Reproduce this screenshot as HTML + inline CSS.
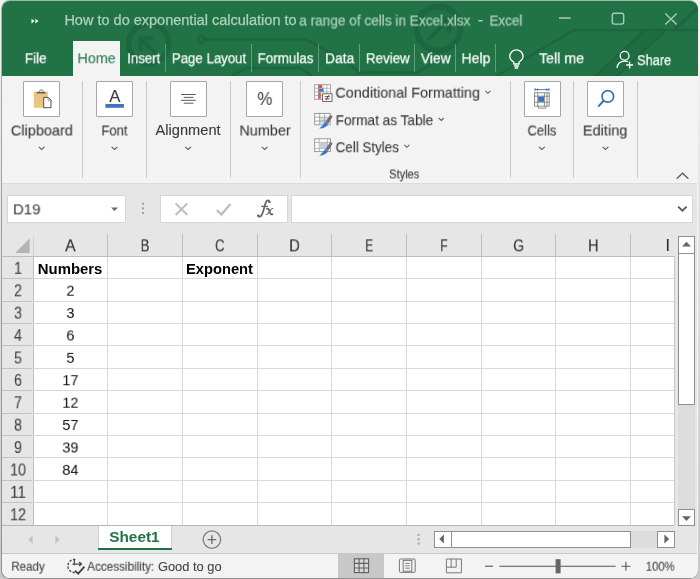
<!DOCTYPE html>
<html><head><meta charset="utf-8"><title>Excel</title>
<style>
html,body{margin:0;padding:0;width:700px;height:579px;overflow:hidden;}
body{background:linear-gradient(#f6f2f4,#e4e4e4 40%,#c9c9c9);font-family:"Liberation Sans",sans-serif;position:relative;}
.a{position:absolute;}
.t{position:absolute;left:0;top:0;white-space:pre;line-height:1;transform-origin:0 0;display:inline-block;will-change:transform;-webkit-text-stroke:0.25px currentColor;}
#win{position:absolute;left:1.5px;top:0.5px;width:696.5px;height:577.6px;border-radius:8px;overflow:hidden;background:#f3f3f3;}
#shadow{position:absolute;left:1px;top:0;width:697px;height:579px;border-radius:8.5px;background:linear-gradient(#9cbaa8 0,#9cbaa8 75px,#a4a4a4 76px,#909090 100%);}
.sep{position:absolute;width:1px;background:#c9c9c9;top:81px;height:97px;}
.tsep{position:absolute;width:1px;background:rgba(255,255,255,.3);top:44px;height:28px;}
.bigbtn{position:absolute;top:81.3px;width:35.2px;height:33.3px;background:#fff;border:1px solid #a6a6a6;border-radius:1px;box-sizing:content-box;}
svg{position:absolute;overflow:visible;}
</style></head><body>
<div id="shadow"></div>
<div id="win">
<div class="a" style="left:-1.5px;top:-0.5px;width:700px;height:579px;">
<div class="a" style="left:0.00px;top:0.00px;width:700.00px;height:75.60px;background:#217346;"></div>
<svg style="left:0;top:0" width="700" height="76" viewBox="0 0 700 76" fill="none" stroke="#1a5c38" stroke-opacity=".5">
<circle cx="148.5" cy="43.7" r="20" stroke-width="5.5"/>
<path d="M158 56 L141.5 39.5 M140.5 51 V38.5 H153" stroke-width="4"/>
<circle cx="201.3" cy="39.2" r="3.3" stroke-width="2.5"/>
<path d="M205 39.2 H306 L346 62 L360 72.5 H416 L432 64" stroke-width="3"/>
<circle cx="438.5" cy="28.5" r="22" stroke-width="6"/>
<path d="M428 40 L448 20 M435 19 H449 V33" stroke-width="4.5"/>
<path d="M232 76 L247 68 H300 L312 76" stroke-width="2.5"/>
<path d="M497 76 L521 61 L574 30 H700" stroke-width="2.5"/>
<path d="M593 78 L643.5 31 H665.5 L615 78 Z" fill="#1a5c38" fill-opacity=".3" stroke="none"/>
<path d="M593 78 L643.5 31 M615 78 L665.5 31" stroke-width="2"/>
<path d="M700 6 L675 29" stroke-width="3"/>
</svg>
<div class="a" style="left:1.30px;top:75.60px;width:1.00px;height:503.40px;background:#a6a6a6;"></div>
<div class="a" style="left:73.00px;top:41.00px;width:47.20px;height:35.50px;background:#f3f3f3;"></div>
<div class="tsep" style="left:165.2px"></div>
<div class="tsep" style="left:250.9px"></div>
<div class="tsep" style="left:318.1px"></div>
<div class="tsep" style="left:358.9px"></div>
<div class="tsep" style="left:414.4px"></div>
<div class="tsep" style="left:455.2px"></div>
<div class="tsep" style="left:495.2px"></div>
<svg style="left:0;top:0" width="700" height="76" viewBox="0 0 700 76">
<path d="M31.5 18.7 L34.5 21.1 L31.5 23.5 Z M35.4 18.7 L38.4 21.1 L35.4 23.5 Z" fill="#fff"/>
<path d="M559 18 H570.6" stroke="#a9ccb8" stroke-width="1.4" fill="none"/>
<rect x="612.3" y="13.3" width="11.4" height="10.8" rx="2" stroke="#a9ccb8" stroke-width="1.4" fill="none"/>
<path d="M665.3 13.6 L676.7 24.6 M676.7 13.6 L665.3 24.6" stroke="#a9ccb8" stroke-width="1.4" fill="none"/>
<!-- lightbulb -->
<path d="M513.7 64 V62 C511.2 60.4 509.8 58.6 509.8 56.4 A6.6 6.6 0 0 1 523 56.4 C523 58.6 521.6 60.4 519.1 62 V64 Z M513.9 66 H518.9 M514.7 68 H518.1" stroke="#fff" stroke-width="1.3" fill="none" stroke-linejoin="round"/>
<!-- share person -->
<circle cx="624.6" cy="55.8" r="4.4" stroke="#fff" stroke-width="1.3" fill="none"/>
<path d="M617 67.8 C617.6 63.4 620.4 61.1 624.8 61.1 C626.2 61.1 627.2 61.3 628 61.7" stroke="#fff" stroke-width="1.3" fill="none"/>
<path d="M629.6 61.6 V68.4 M626.2 65 H633" stroke="#fff" stroke-width="1.3" fill="none"/>
</svg>
<div class="a" style="left:2.30px;top:75.60px;width:694.90px;height:107.80px;background:#f3f3f3;"></div>
<div class="a" style="left:73.00px;top:75.00px;width:47.20px;height:2.00px;background:#f3f3f3;"></div>
<div class="sep" style="left:82.0px"></div>
<div class="sep" style="left:145.8px"></div>
<div class="sep" style="left:229.8px"></div>
<div class="sep" style="left:299.9px"></div>
<div class="sep" style="left:509.9px"></div>
<div class="sep" style="left:572.9px"></div>
<div class="sep" style="left:636.5px"></div>
<div class="bigbtn" style="left:23.3px"></div>
<div class="bigbtn" style="left:96.0px"></div>
<div class="bigbtn" style="left:170.2px"></div>
<div class="bigbtn" style="left:246.3px"></div>
<div class="bigbtn" style="left:523.6px"></div>
<div class="bigbtn" style="left:586.9px"></div>
<svg style="left:0;top:76px" width="700" height="110" viewBox="0 76 700 110">
<!-- clipboard -->
<rect x="33.8" y="91.6" width="14" height="16.2" rx="0.6" fill="#ecc481"/>
<path d="M39.3 92.4 C39.3 88.8 43.3 88.8 43.3 92.4" fill="#e4e4e4" stroke="#7a7a7a" stroke-width="1"/>
<path d="M36.8 92.7 H45.4" stroke="#5f5f5f" stroke-width="1.5"/>
<path d="M43.7 97.4 H48.3 L51 100.1 V107.7 H43.7 Z" fill="#fff" stroke="#4f4f4f" stroke-width="1"/>
<path d="M48.2 97.6 V100.3 H50.8" fill="none" stroke="#8a8a8a" stroke-width="0.9"/>
<!-- font A -->
<rect x="105.4" y="104" width="18.5" height="3.8" fill="#4174b8"/>
<!-- alignment -->
<path d="M181 94.5 H195.8 M183.7 97.4 H193.5 M181 100.3 H195.8 M183.7 103.2 H193.5" stroke="#5a5a5a" stroke-width="1"/>
<!-- cells -->
<g stroke="#7f7f7f" stroke-width="0.9" fill="none">
<rect x="534.6" y="92.8" width="14.6" height="13.4" fill="#fff"/>
<path d="M534.6 96.2 H549.2 M534.6 102.2 H549.2 M537.8 92.8 V106.2 M544.4 92.8 V106.2 M547 92.8 V106.2"/>
<path d="M538.4 106.2 V108.2 H545.8 V106.2"/>
</g>
<rect x="538.2" y="96.6" width="5.8" height="5.2" fill="#3f6fb5"/>
<path d="M535 89.6 H549 M535 88 V91.2 M549 88 V91.2" stroke="#3f6fb5" stroke-width="0.9" fill="none"/>
<path d="M536 89.6 l2 -1.4 v2.8 z M548 89.6 l-2 -1.4 v2.8 z" fill="#3f6fb5"/>
<!-- editing magnifier -->
<circle cx="607.8" cy="96.4" r="5.8" stroke="#3f72a8" stroke-width="1.7" fill="none"/>
<path d="M603.6 100.8 L598.2 106.6" stroke="#3f72a8" stroke-width="2" fill="none"/>
<!-- chevrons under group labels -->
<g stroke="#5e5e5e" stroke-width="1.1" fill="none">
<path d="M38.8 146.8 l2.9 2.7 l2.9 -2.7"/>
<path d="M111.6 146.8 l2.9 2.7 l2.9 -2.7"/>
<path d="M185.2 146.8 l2.9 2.7 l2.9 -2.7"/>
<path d="M261.8 146.8 l2.9 2.7 l2.9 -2.7"/>
<path d="M539.0 146.8 l2.9 2.7 l2.9 -2.7"/>
<path d="M602.6 146.8 l2.9 2.7 l2.9 -2.7"/>
<path d="M485.4 90.9 l2.5 2.4 l2.5 -2.4"/>
<path d="M438.8 118.0 l2.5 2.4 l2.5 -2.4"/>
<path d="M404.4 144.9 l2.5 2.4 l2.5 -2.4"/>
</g>
<path d="M676.6 178.8 L682.5 173.2 L688.4 178.8" stroke="#5c5c5c" stroke-width="1.25" fill="none"/>
<!-- styles small icons -->
<g>
 <!-- conditional formatting -->
 <rect x="314.7" y="84.7" width="15.8" height="14.6" fill="#fff" stroke="#9b9b9b" stroke-width="0.9"/>
 <path d="M314.7 88.3 H330.5 M314.7 91.9 H330.5 M314.7 95.5 H330.5 M318.3 84.7 V99.3 M323.0 84.7 V99.3 M326.8 84.7 V99.3" stroke="#a9a9a9" stroke-width="0.8"/>
 <rect x="318.4" y="84.9" width="3.6" height="3.2" fill="#d9563f"/>
 <rect x="318.4" y="88.7" width="5.2" height="3.0" fill="#4478c0"/>
 <rect x="318.4" y="92.3" width="2.4" height="6.6" fill="#d9563f"/>
 <rect x="322.6" y="93.8" width="9.4" height="7.6" fill="#fff" stroke="#5a5a5a" stroke-width="0.9"/>
 <path d="M324.8 96.6 H329.8 M324.8 98.8 H329.8 M328.8 95.2 L326 100.2" stroke="#333" stroke-width="0.8"/>
 <!-- format as table -->
 <rect x="314.7" y="113.4" width="15.4" height="11.4" fill="#fff" stroke="#8f8f8f" stroke-width="0.9"/>
 <rect x="319.6" y="117.4" width="10" height="7" fill="#d3dbe6"/>
 <path d="M314.7 117.2 H330.1 M314.7 121 H330.1 M319.6 113.4 V124.8 M324.6 113.4 V124.8" stroke="#9a9a9a" stroke-width="0.8"/>
 <path d="M330.4 114.8 L332.6 116.4 L328.2 123.8 L325.4 122 Z" fill="#6f6f6f"/>
 <path d="M325.2 122 L328.2 124 C326.6 127.4 322.6 128.8 319.2 128.4 C321.4 127 322.8 125 325.2 122 Z" fill="#3f7ac6"/>
 <!-- cell styles -->
 <rect x="314.7" y="138.8" width="15.8" height="12.8" fill="#fff" stroke="#8f8f8f" stroke-width="0.9"/>
 <path d="M314.7 142.4 H330.5 M314.7 148.6 H330.5 M319.2 138.8 V151.6 M327.4 138.8 V151.6" stroke="#a5a5a5" stroke-width="0.8"/>
 <rect x="319.8" y="143" width="7.2" height="5.2" fill="#bdd0e8"/>
 <path d="M330.4 141.8 L332.6 143.4 L328.2 150.8 L325.4 149 Z" fill="#6f6f6f"/>
 <path d="M325.2 149 L328.2 151 C326.6 154.4 322.6 155.8 319.2 155.4 C321.4 154 322.8 152 325.2 149 Z" fill="#3f7ac6"/>
</g>
</svg>
<div class="a" style="left:2.30px;top:183.40px;width:694.90px;height:50.60px;background:#e6e6e6;"></div>
<div class="a" style="left:2.30px;top:183.00px;width:694.90px;height:1.00px;background:#dcdcdc;"></div>
<div class="a" style="left:7.30px;top:195.00px;width:118.70px;height:27.80px;background:#fff;box-shadow:inset 0 0 0 1px #d6d6d6;"></div>
<div class="a" style="left:160.20px;top:195.00px;width:128.10px;height:27.80px;background:#fff;box-shadow:inset 0 0 0 1px #d6d6d6;"></div>
<div class="a" style="left:290.60px;top:195.00px;width:402.00px;height:27.80px;background:#fff;box-shadow:inset 0 0 0 1px #d6d6d6;"></div>
<svg style="left:0;top:184px" width="700" height="50" viewBox="0 184 700 50">
<path d="M111.0 207.5 H118.0 L114.5 211.1 Z" fill="#6a6a6a"/>
<rect x="142.0" y="202.8" width="2" height="2" fill="#a2a2a2"/><rect x="142.0" y="207.4" width="2" height="2" fill="#a2a2a2"/><rect x="142.0" y="212.0" width="2" height="2" fill="#a2a2a2"/>
<path d="M175.6 203.4 L187.4 215 M187.4 203.4 L175.6 215" stroke="#bdbdbd" stroke-width="2" fill="none"/>
<path d="M216.8 210 L221.4 214.6 L230.4 204" stroke="#bdbdbd" stroke-width="2.3" fill="none"/>
<path d="M678.2 206.6 L682.4 210.6 L686.6 206.6" stroke="#5a5a5a" stroke-width="1.9" fill="none"/>
<g stroke="#666" fill="none" stroke-linecap="round">
<path d="M269.5 201.9 C269.3 200.2 267.1 199.8 266.1 201.8 C265.1 203.8 264.7 206 263.7 209.6 C262.9 212.6 262.1 215.2 260.7 216.2 C259.5 217 258.1 216.6 257.9 215.6" stroke-width="1.8"/>
<circle cx="269.2" cy="202" r="0.7" fill="#666" stroke-width="0.8"/><circle cx="258.3" cy="215.4" r="0.7" fill="#666" stroke-width="0.8"/>
<path d="M261.6 206.3 H267.6" stroke-width="1.2"/>
<path d="M267 208.7 C268.4 208.3 269 209.4 269.6 211.4 C270.2 213.4 270.8 214.9 272.4 214.3" stroke-width="1.8"/>
<path d="M272.8 208.5 C271.6 208.2 270.6 209.8 269.6 211.4 C268.6 213 267.6 214.9 266.2 214.5" stroke-width="1.1"/>
</g>
</svg>
<div class="a" style="left:2.30px;top:234.00px;width:694.90px;height:292.00px;background:#e6e6e6;"></div>
<div class="a" style="left:33.00px;top:256.30px;width:641.40px;height:269.00px;background:#fff;"></div>
<div class="a" style="left:2.30px;top:255.80px;width:672.10px;height:1.00px;background:#bcbcbc;"></div>
<div class="a" style="left:32.50px;top:256.30px;width:1.00px;height:269.00px;background:#c0c0c0;"></div>
<div class="a" style="left:32.50px;top:236.00px;width:1.00px;height:20.30px;background:#d2d2d2;"></div>
<div class="a" style="left:107.21px;top:234.40px;width:1.00px;height:21.90px;background:#bdbdbd;"></div>
<div class="a" style="left:107.21px;top:256.80px;width:1.00px;height:268.50px;background:#d9d9d9;"></div>
<div class="a" style="left:181.92px;top:234.40px;width:1.00px;height:21.90px;background:#bdbdbd;"></div>
<div class="a" style="left:181.92px;top:256.80px;width:1.00px;height:268.50px;background:#d9d9d9;"></div>
<div class="a" style="left:256.63px;top:234.40px;width:1.00px;height:21.90px;background:#bdbdbd;"></div>
<div class="a" style="left:256.63px;top:256.80px;width:1.00px;height:268.50px;background:#d9d9d9;"></div>
<div class="a" style="left:331.34px;top:234.40px;width:1.00px;height:21.90px;background:#bdbdbd;"></div>
<div class="a" style="left:331.34px;top:256.80px;width:1.00px;height:268.50px;background:#d9d9d9;"></div>
<div class="a" style="left:406.05px;top:234.40px;width:1.00px;height:21.90px;background:#bdbdbd;"></div>
<div class="a" style="left:406.05px;top:256.80px;width:1.00px;height:268.50px;background:#d9d9d9;"></div>
<div class="a" style="left:480.76px;top:234.40px;width:1.00px;height:21.90px;background:#bdbdbd;"></div>
<div class="a" style="left:480.76px;top:256.80px;width:1.00px;height:268.50px;background:#d9d9d9;"></div>
<div class="a" style="left:555.47px;top:234.40px;width:1.00px;height:21.90px;background:#bdbdbd;"></div>
<div class="a" style="left:555.47px;top:256.80px;width:1.00px;height:268.50px;background:#d9d9d9;"></div>
<div class="a" style="left:630.18px;top:234.40px;width:1.00px;height:21.90px;background:#bdbdbd;"></div>
<div class="a" style="left:630.18px;top:256.80px;width:1.00px;height:268.50px;background:#d9d9d9;"></div>
<div class="a" style="left:33.50px;top:278.20px;width:640.90px;height:1.00px;background:#d9d9d9;"></div>
<div class="a" style="left:2.30px;top:278.20px;width:30.20px;height:1.00px;background:#c3c3c3;"></div>
<div class="a" style="left:33.50px;top:300.60px;width:640.90px;height:1.00px;background:#d9d9d9;"></div>
<div class="a" style="left:2.30px;top:300.60px;width:30.20px;height:1.00px;background:#c3c3c3;"></div>
<div class="a" style="left:33.50px;top:323.00px;width:640.90px;height:1.00px;background:#d9d9d9;"></div>
<div class="a" style="left:2.30px;top:323.00px;width:30.20px;height:1.00px;background:#c3c3c3;"></div>
<div class="a" style="left:33.50px;top:345.40px;width:640.90px;height:1.00px;background:#d9d9d9;"></div>
<div class="a" style="left:2.30px;top:345.40px;width:30.20px;height:1.00px;background:#c3c3c3;"></div>
<div class="a" style="left:33.50px;top:367.80px;width:640.90px;height:1.00px;background:#d9d9d9;"></div>
<div class="a" style="left:2.30px;top:367.80px;width:30.20px;height:1.00px;background:#c3c3c3;"></div>
<div class="a" style="left:33.50px;top:390.20px;width:640.90px;height:1.00px;background:#d9d9d9;"></div>
<div class="a" style="left:2.30px;top:390.20px;width:30.20px;height:1.00px;background:#c3c3c3;"></div>
<div class="a" style="left:33.50px;top:412.60px;width:640.90px;height:1.00px;background:#d9d9d9;"></div>
<div class="a" style="left:2.30px;top:412.60px;width:30.20px;height:1.00px;background:#c3c3c3;"></div>
<div class="a" style="left:33.50px;top:435.00px;width:640.90px;height:1.00px;background:#d9d9d9;"></div>
<div class="a" style="left:2.30px;top:435.00px;width:30.20px;height:1.00px;background:#c3c3c3;"></div>
<div class="a" style="left:33.50px;top:457.40px;width:640.90px;height:1.00px;background:#d9d9d9;"></div>
<div class="a" style="left:2.30px;top:457.40px;width:30.20px;height:1.00px;background:#c3c3c3;"></div>
<div class="a" style="left:33.50px;top:479.80px;width:640.90px;height:1.00px;background:#d9d9d9;"></div>
<div class="a" style="left:2.30px;top:479.80px;width:30.20px;height:1.00px;background:#c3c3c3;"></div>
<div class="a" style="left:33.50px;top:502.20px;width:640.90px;height:1.00px;background:#d9d9d9;"></div>
<div class="a" style="left:2.30px;top:502.20px;width:30.20px;height:1.00px;background:#c3c3c3;"></div>
<div class="a" style="left:2.30px;top:524.80px;width:672.10px;height:1.00px;background:#b5b5b5;"></div>
<div class="a" style="left:673.90px;top:256.30px;width:1.00px;height:269.00px;background:#c9c9c9;"></div>
<svg style="left:0;top:234px" width="40" height="24" viewBox="0 234 40 24"><path d="M29.6 238.6 V253 H15.2 Z" fill="#b4b4b4"/></svg>
<div class="a" style="left:677.60px;top:236.50px;width:17.70px;height:289.90px;background:#dcdcdc;"></div>
<div class="a" style="left:677.60px;top:236.30px;width:17.70px;height:17.90px;background:#fff;box-shadow:inset 0 0 0 1px #8f8f8f;"></div>
<div class="a" style="left:677.60px;top:509.30px;width:17.70px;height:17.20px;background:#fff;box-shadow:inset 0 0 0 1px #8f8f8f;"></div>
<div class="a" style="left:677.60px;top:253.40px;width:17.70px;height:151.40px;background:#fff;box-shadow:inset 0 0 0 1px #8f8f8f;"></div>
<svg style="left:670px;top:234px" width="30" height="300" viewBox="670 234 30 300">
<path d="M682 246.6 H691 L686.5 241.8 Z" fill="#666"/>
<path d="M682 516.3 H691 L686.5 521.1 Z" fill="#666"/></svg>
<div class="a" style="left:2.30px;top:526.00px;width:694.90px;height:27.30px;background:#e6e6e6;"></div>
<div class="a" style="left:98.40px;top:526.20px;width:73.20px;height:23.20px;background:#fff;box-shadow:inset 1px 0 0 #d2d2d2,inset -1px 0 0 #d2d2d2;"></div>
<div class="a" style="left:98.40px;top:547.50px;width:73.20px;height:2.00px;background:#217346;"></div>
<div class="a" style="left:2.30px;top:552.80px;width:694.90px;height:1.00px;background:#c8c8c8;"></div>
<svg style="left:0;top:526px" width="700" height="28" viewBox="0 526 700 28">
<path d="M32.6 535.4 V543.8 L28.2 539.6 Z" fill="#c2c2c2"/>
<path d="M55.4 535.4 V543.8 L59.8 539.6 Z" fill="#c2c2c2"/>
<circle cx="211.9" cy="539.6" r="8.7" stroke="#7c7c7c" stroke-width="1.3" fill="none"/>
<path d="M207.6 539.6 H216.2 M211.9 535.3 V543.9" stroke="#6e6e6e" stroke-width="1.4"/>
<rect x="417.6" y="533.9" width="2" height="2" fill="#a2a2a2"/><rect x="417.6" y="538.3" width="2" height="2" fill="#a2a2a2"/><rect x="417.6" y="542.6" width="2" height="2" fill="#a2a2a2"/>
</svg>
<div class="a" style="left:434.30px;top:530.50px;width:240.30px;height:17.40px;background:#dcdcdc;"></div>
<div class="a" style="left:434.30px;top:530.50px;width:17.30px;height:17.40px;background:#fff;box-shadow:inset 0 0 0 1px #8f8f8f;"></div>
<div class="a" style="left:450.80px;top:530.50px;width:180.20px;height:17.40px;background:#fff;box-shadow:inset 0 0 0 1px #8f8f8f;"></div>
<div class="a" style="left:657.00px;top:530.50px;width:17.60px;height:17.40px;background:#fff;box-shadow:inset 0 0 0 1px #8f8f8f;"></div>
<svg style="left:430px;top:528px" width="250" height="24" viewBox="430 528 250 24">
<path d="M443.9 534.6 V543.6 L439.2 539.1 Z" fill="#666"/>
<path d="M664.4 534.6 V543.6 L669.2 539.1 Z" fill="#666"/></svg>
<div class="a" style="left:2.30px;top:553.80px;width:694.90px;height:25.20px;background:#f3f3f3;"></div>
<div class="a" style="left:337.90px;top:553.80px;width:46.40px;height:25.20px;background:#c8c8c8;"></div>
<svg style="left:0;top:554px" width="700" height="25" viewBox="0 554 700 25">
<!-- accessibility icon -->
<path d="M75.4 559.6 A 6.5 6.5 0 1 0 74.8 572.5" stroke="#4a4a4a" stroke-width="1.4" fill="none" stroke-dasharray="2.4 1.5"/>
<path d="M74.4 558.8 V565.2 M72.4 564 H81.2 M79.2 562 L81.6 564 L79.2 566" stroke="#4a4a4a" stroke-width="1.25" fill="none"/>
<path d="M75 570.6 L78.2 573.6 L84.4 566.6" stroke="#444" stroke-width="1.9" fill="none"/>
<!-- normal view -->
<rect x="354.4" y="558.8" width="14.2" height="13.8" fill="#dadada"/>
<g stroke="#606060" stroke-width="1.1" fill="none">
<rect x="354.4" y="558.8" width="14.2" height="13.8"/>
<path d="M359.1 558.8 V572.6 M363.9 558.8 V572.6 M354.4 563.4 H368.6 M354.4 568 H368.6"/>
</g>
<g stroke="#777" stroke-width="1" fill="none">
<!-- page layout -->
<rect x="399.4" y="559" width="15.8" height="13.4" rx="1"/>
<rect x="403.2" y="560.4" width="8.6" height="10.8"/>
<path d="M405.2 563.4 H409.8 M405.2 565.8 H409.8 M405.2 568.2 H409.8" stroke-width="0.9"/>
<!-- page break -->
<path d="M446.4 559 H461.4 V572.8 H446.4 Z M446.4 567.2 H456.2 V559 M451.2 559 V567.2"/>
</g>
<path d="M485 566.2 H493" stroke="#555" stroke-width="1.1"/>
<path d="M499.4 566.3 H615.6" stroke="#555" stroke-width="1.1"/>
<rect x="555.6" y="559.2" width="5" height="14.2" fill="#666"/>
<path d="M621.4 566.2 H630.4 M625.9 561.7 V570.7" stroke="#555" stroke-width="1.1"/>
</svg>
</div></div>
<span class="t" style="font-size:14.0px;color:#acd1bb;transform:translate(64.40px,13.44px) scaleX(1.0359)">How to do exponential calculation to</span>
<span class="t" style="font-size:14.0px;color:#acd1bb;transform:translate(299.20px,13.44px) scaleX(0.9735)">a range of cells in Excel.xlsx</span>
<span class="t" style="font-size:14.0px;color:#acd1bb;transform:translate(478.00px,13.44px) scaleX(1.0702)">-</span>
<span class="t" style="font-size:14.0px;color:#acd1bb;transform:translate(489.40px,13.44px) scaleX(0.9639)">Excel</span>
<span class="t" style="font-size:15.2px;color:#fff;transform:translate(24.80px,50.25px) scaleX(0.8904)">File</span>
<span class="t" style="font-size:15.2px;color:#2a7a50;-webkit-text-stroke:0.1px currentColor;transform:translate(77.40px,50.25px) scaleX(0.9453)">Home</span>
<span class="t" style="font-size:15.2px;color:#fff;transform:translate(127.20px,50.25px) scaleX(0.8688)">Insert</span>
<span class="t" style="font-size:15.2px;color:#fff;transform:translate(171.80px,50.25px) scaleX(0.8722)">Page Layout</span>
<span class="t" style="font-size:15.2px;color:#fff;transform:translate(257.60px,50.25px) scaleX(0.8816)">Formulas</span>
<span class="t" style="font-size:15.2px;color:#fff;transform:translate(325.00px,50.25px) scaleX(0.9098)">Data</span>
<span class="t" style="font-size:15.2px;color:#fff;transform:translate(365.80px,50.25px) scaleX(0.8833)">Review</span>
<span class="t" style="font-size:15.2px;color:#fff;transform:translate(420.80px,50.25px) scaleX(0.9125)">View</span>
<span class="t" style="font-size:15.2px;color:#fff;transform:translate(461.40px,50.25px) scaleX(0.9280)">Help</span>
<span class="t" style="font-size:15.2px;color:#fff;transform:translate(539.00px,50.25px) scaleX(0.9354)">Tell me</span>
<span class="t" style="font-size:15.2px;color:#fff;transform:translate(637.00px,52.15px) scaleX(0.8438)">Share</span>
<span class="t" style="font-size:14.6px;color:#383838;-webkit-text-stroke:0.1px currentColor;transform:translate(10.80px,123.45px) scaleX(0.9941)">Clipboard</span>
<span class="t" style="font-size:14.6px;color:#383838;-webkit-text-stroke:0.1px currentColor;transform:translate(101.40px,123.45px) scaleX(0.8903)">Font</span>
<span class="t" style="font-size:14.6px;color:#383838;-webkit-text-stroke:0.1px currentColor;transform:translate(155.60px,123.45px) scaleX(1.0014)">Alignment</span>
<span class="t" style="font-size:14.6px;color:#383838;-webkit-text-stroke:0.1px currentColor;transform:translate(239.40px,123.45px) scaleX(0.9883)">Number</span>
<span class="t" style="font-size:14.6px;color:#383838;-webkit-text-stroke:0.1px currentColor;transform:translate(527.60px,123.45px) scaleX(0.8817)">Cells</span>
<span class="t" style="font-size:14.6px;color:#383838;-webkit-text-stroke:0.1px currentColor;transform:translate(582.80px,123.45px) scaleX(0.9972)">Editing</span>
<span class="t" style="font-size:14.6px;color:#383838;-webkit-text-stroke:0.1px currentColor;transform:translate(335.40px,85.65px) scaleX(0.9848)">Conditional Formatting</span>
<span class="t" style="font-size:14.6px;color:#383838;-webkit-text-stroke:0.1px currentColor;transform:translate(335.60px,113.25px) scaleX(0.9351)">Format as Table</span>
<span class="t" style="font-size:14.6px;color:#383838;-webkit-text-stroke:0.1px currentColor;transform:translate(335.60px,140.25px) scaleX(0.9168)">Cell Styles</span>
<span class="t" style="font-size:12.6px;color:#383838;-webkit-text-stroke:0.1px currentColor;transform:translate(389.20px,168.43px) scaleX(0.8747)">Styles</span>
<span class="t" style="font-size:16.6px;color:#3b3b3b;-webkit-text-stroke:0.1px currentColor;transform:translate(109.20px,88.77px) scaleX(1.0110)">A</span>
<span class="t" style="font-size:18.4px;color:#4a4a4a;-webkit-text-stroke:0.1px currentColor;transform:translate(257.40px,89.88px) scaleX(0.9169)">%</span>
<span class="t" style="font-size:15.4px;color:#444;-webkit-text-stroke:0.1px currentColor;transform:translate(12.90px,201.35px) scaleX(0.9775)">D19</span>
<span class="t" style="font-size:16.2px;color:#2c2c2c;-webkit-text-stroke:0.1px currentColor;transform:translate(65.05px,237.36px) scaleX(0.9803)">A</span>
<span class="t" style="font-size:16.2px;color:#2c2c2c;-webkit-text-stroke:0.1px currentColor;transform:translate(140.76px,237.36px) scaleX(0.7954)">B</span>
<span class="t" style="font-size:16.2px;color:#2c2c2c;-webkit-text-stroke:0.1px currentColor;transform:translate(214.97px,237.36px) scaleX(0.8203)">C</span>
<span class="t" style="font-size:16.2px;color:#2c2c2c;-webkit-text-stroke:0.1px currentColor;transform:translate(289.19px,237.36px) scaleX(0.9057)">D</span>
<span class="t" style="font-size:16.2px;color:#2c2c2c;-webkit-text-stroke:0.1px currentColor;transform:translate(365.29px,237.36px) scaleX(0.7214)">E</span>
<span class="t" style="font-size:16.2px;color:#2c2c2c;-webkit-text-stroke:0.1px currentColor;transform:translate(440.20px,237.36px) scaleX(0.7482)">F</span>
<span class="t" style="font-size:16.2px;color:#2c2c2c;-webkit-text-stroke:0.1px currentColor;transform:translate(513.32px,237.36px) scaleX(0.8417)">G</span>
<span class="t" style="font-size:16.2px;color:#2c2c2c;-webkit-text-stroke:0.1px currentColor;transform:translate(588.02px,237.36px) scaleX(0.9057)">H</span>
<span class="t" style="font-size:16.2px;color:#2c2c2c;-webkit-text-stroke:0.1px currentColor;transform:translate(665.40px,237.36px) scaleX(1.0000)">I</span>
<span class="t" style="font-size:15.6px;color:#444;-webkit-text-stroke:0.1px currentColor;transform:translate(14.05px,260.86px) scaleX(0.9094)">1</span>
<span class="t" style="font-size:15.6px;color:#444;-webkit-text-stroke:0.1px currentColor;transform:translate(14.05px,283.26px) scaleX(0.9094)">2</span>
<span class="t" style="font-size:15.6px;color:#444;-webkit-text-stroke:0.1px currentColor;transform:translate(14.05px,305.66px) scaleX(0.9094)">3</span>
<span class="t" style="font-size:15.6px;color:#444;-webkit-text-stroke:0.1px currentColor;transform:translate(14.05px,328.06px) scaleX(0.9094)">4</span>
<span class="t" style="font-size:15.6px;color:#444;-webkit-text-stroke:0.1px currentColor;transform:translate(14.05px,350.46px) scaleX(0.9094)">5</span>
<span class="t" style="font-size:15.6px;color:#444;-webkit-text-stroke:0.1px currentColor;transform:translate(14.05px,372.86px) scaleX(0.9094)">6</span>
<span class="t" style="font-size:15.6px;color:#444;-webkit-text-stroke:0.1px currentColor;transform:translate(14.05px,395.26px) scaleX(0.9094)">7</span>
<span class="t" style="font-size:15.6px;color:#444;-webkit-text-stroke:0.1px currentColor;transform:translate(14.05px,417.66px) scaleX(0.9094)">8</span>
<span class="t" style="font-size:15.6px;color:#444;-webkit-text-stroke:0.1px currentColor;transform:translate(14.05px,440.06px) scaleX(0.9094)">9</span>
<span class="t" style="font-size:15.6px;color:#444;-webkit-text-stroke:0.1px currentColor;transform:translate(10.10px,462.46px) scaleX(0.9102)">10</span>
<span class="t" style="font-size:15.6px;color:#444;-webkit-text-stroke:0.1px currentColor;transform:translate(10.10px,484.86px) scaleX(0.9761)">11</span>
<span class="t" style="font-size:15.6px;color:#444;-webkit-text-stroke:0.1px currentColor;transform:translate(10.10px,507.26px) scaleX(0.9102)">12</span>
<span class="t" style="font-size:14.6px;color:#000;font-weight:700;-webkit-text-stroke:0;transform:translate(37.80px,261.85px) scaleX(1.0211)">Numbers</span>
<span class="t" style="font-size:14.6px;color:#000;font-weight:700;-webkit-text-stroke:0;transform:translate(186.00px,261.85px) scaleX(1.0078)">Exponent</span>
<span class="t" style="font-size:15.4px;color:#111;-webkit-text-stroke:0;transform:translate(66.35px,282.65px) scaleX(0.9460)">2</span>
<span class="t" style="font-size:15.4px;color:#111;-webkit-text-stroke:0;transform:translate(66.35px,305.05px) scaleX(0.9460)">3</span>
<span class="t" style="font-size:15.4px;color:#111;-webkit-text-stroke:0;transform:translate(66.35px,327.45px) scaleX(0.9460)">6</span>
<span class="t" style="font-size:15.4px;color:#111;-webkit-text-stroke:0;transform:translate(66.35px,349.85px) scaleX(0.9460)">5</span>
<span class="t" style="font-size:15.4px;color:#111;-webkit-text-stroke:0;transform:translate(62.30px,372.25px) scaleX(0.9460)">17</span>
<span class="t" style="font-size:15.4px;color:#111;-webkit-text-stroke:0;transform:translate(62.30px,394.65px) scaleX(0.9460)">12</span>
<span class="t" style="font-size:15.4px;color:#111;-webkit-text-stroke:0;transform:translate(62.30px,417.05px) scaleX(0.9460)">57</span>
<span class="t" style="font-size:15.4px;color:#111;-webkit-text-stroke:0;transform:translate(62.30px,439.45px) scaleX(0.9460)">39</span>
<span class="t" style="font-size:15.4px;color:#111;-webkit-text-stroke:0;transform:translate(62.30px,461.85px) scaleX(0.9460)">84</span>
<span class="t" style="font-size:15.0px;color:#217346;font-weight:700;-webkit-text-stroke:0;transform:translate(109.20px,528.65px) scaleX(1.0243)">Sheet1</span>
<span class="t" style="font-size:12.6px;color:#444;-webkit-text-stroke:0.1px currentColor;transform:translate(11.30px,560.63px) scaleX(0.9202)">Ready</span>
<span class="t" style="font-size:12.6px;color:#444;-webkit-text-stroke:0.1px currentColor;transform:translate(87.20px,560.73px) scaleX(0.9293)">Accessibility:</span>
<span class="t" style="font-size:12.6px;color:#444;-webkit-text-stroke:0.1px currentColor;transform:translate(157.90px,560.73px) scaleX(1.0220)">Good to go</span>
<span class="t" style="font-size:12.6px;color:#444;-webkit-text-stroke:0.1px currentColor;transform:translate(645.80px,560.73px) scaleX(0.8939)">100%</span>
</body></html>
